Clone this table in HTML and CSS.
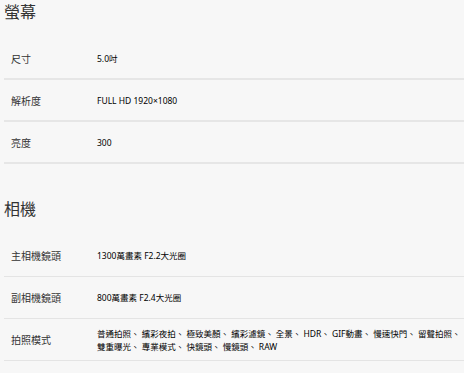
FILE: index.html
```html
<!DOCTYPE html>
<html lang="zh-Hant">
<head>
    <meta charset="UTF-8">
    <meta name="viewport" content="width=device-width, initial-scale=1.0">
    <title>規格</title>
    <link rel="stylesheet" href="styles.css">
</head>
<body>

    <div class="spec-section">
        <h2 class="spec-title">螢幕</h2>
        <div class="spec-row thick">
            <div class="spec-label">尺寸</div>
            <div class="spec-value">5.0吋</div>
        </div>
        <div class="spec-row thick">
            <div class="spec-label">解析度</div>
            <div class="spec-value">FULL HD 1920×1080</div>
        </div>
        <div class="spec-row thick">
            <div class="spec-label">亮度</div>
            <div class="spec-value">300</div>
        </div>
    </div>

    <div class="spec-section camera">
        <h2 class="spec-title">相機</h2>
        <div class="spec-row">
            <div class="spec-label">主相機鏡頭</div>
            <div class="spec-value">1300萬畫素 F2.2大光圈</div>
        </div>
        <div class="spec-row">
            <div class="spec-label">副相機鏡頭</div>
            <div class="spec-value">800萬畫素 F2.4大光圈</div>
        </div>
        <div class="spec-row">
            <div class="spec-label">拍照模式</div>
            <div class="spec-value">普通拍照、 繽彩夜拍、 極致美顏、 繽彩濾鏡、 全景、 HDR、 GIF動畫、 慢速快門、 留聲拍照、 雙重曝光、 專業模式、 快鏡頭、 慢鏡頭、 RAW</div>
        </div>
    </div>

</body>
</html>
```

FILE: styles.css
```css
body {
    margin: 0;
    padding: 0 0 0 4px;
    background-color: #f7f7f7;
    font-family: "Noto Sans", "Noto Sans CJK TC", sans-serif;
    color: #333;
}

.spec-section {
    margin-bottom: 33px;
}

.spec-section.camera {
    margin-bottom: 0;
}

.spec-title {
    margin: 0 0 14px 0;
    font-size: 16px;
    font-weight: normal;
    line-height: 24px;
    color: #333;
}

.spec-row {
    display: flex;
    align-items: center;
    min-height: 41px;
    border-bottom: 1px solid #e4e4e4;
}

.spec-row.thick {
    min-height: 40px;
    border-bottom: 2px solid #e6e6e6;
}

.spec-label {
    width: 86px;
    flex-shrink: 0;
    padding-left: 7px;
    font-size: 10px;
    color: #333;
}

.spec-value {
    flex: 1;
    font-size: 8.5px;
    line-height: 13px;
    color: #000;
}
```
